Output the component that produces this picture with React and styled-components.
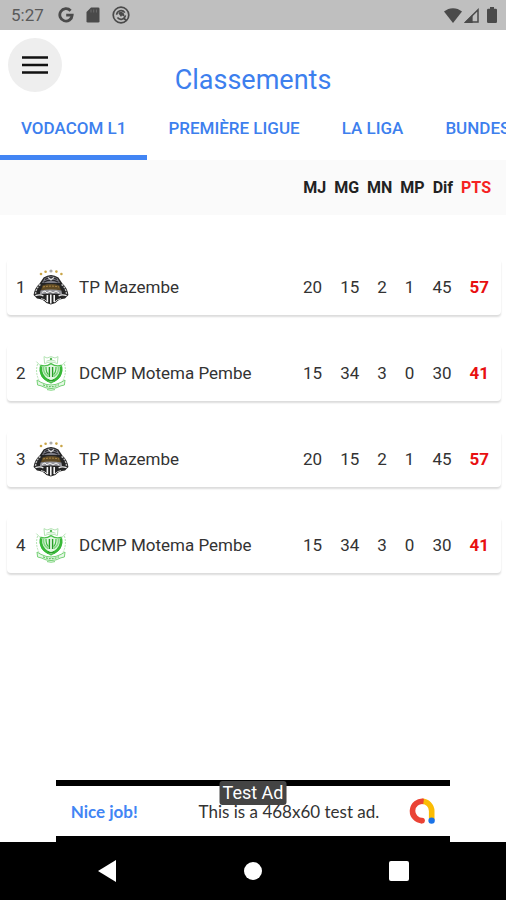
import React, { useState } from 'react';
import styled, { createGlobalStyle } from 'styled-components';

const leagues = ['Vodacom L1', 'Première Ligue', 'La Liga', 'Bundesliga'];

const headings = ['MJ', 'MG', 'MN', 'MP', 'Dif'];

const teams = [
  { rank: 1, name: 'TP Mazembe', crest: 'mazembe', stats: [20, 15, 2, 1, 45], points: 57 },
  { rank: 2, name: 'DCMP Motema Pembe', crest: 'dcmp', stats: [15, 34, 3, 0, 30], points: 41 },
  { rank: 3, name: 'TP Mazembe', crest: 'mazembe', stats: [20, 15, 2, 1, 45], points: 57 },
  { rank: 4, name: 'DCMP Motema Pembe', crest: 'dcmp', stats: [15, 34, 3, 0, 30], points: 41 },
];

const App = () => {
  const [active, setActive] = useState(0);

  return (
    <Screen>
      <GlobalStyle />
      <StatusBar />
      <Header>
        <MenuButton aria-label="Menu">
          <svg width="26" height="20" viewBox="0 0 26 20" stroke="#111" strokeWidth="2.6">
            <path d="M0 2.5h26M0 10h26M0 17.5h26" />
          </svg>
        </MenuButton>
        <Title>Classements</Title>
      </Header>
      <Tabs role="tablist">
        {leagues.map((league, i) => (
          <Tab key={league} role="tab" aria-selected={i === active} $active={i === active} onClick={() => setActive(i)}>
            {league}
          </Tab>
        ))}
      </Tabs>
      <Standings />
      <AdBanner />
      <SystemNav />
    </Screen>
  )
};

export default App

const StatusBar = () => (
  <StatusWrapper>
    <StatusGroup>
      <span>5:27</span>
      <GoogleMark width="16" height="16" viewBox="0 0 16 16" fill="none" stroke="#4a4a4a" strokeWidth="2.8">
        <path d="M12.6 3.7A6.2 6.2 0 1 0 14.2 8.2H8.2" />
      </GoogleMark>
      <svg width="14" height="16" viewBox="0 0 14 16">
        <path d="M5 .5h7.2q1.3 0 1.3 1.3v12.4q0 1.3-1.3 1.3H1.8Q.5 15.5.5 14.2V5z" fill="#4a4a4a" />
        <path d="M5 2.5v3M7.7 2.5v3M10.4 2.5v3" stroke="#6b6b6b" />
      </svg>
      <svg width="18" height="18" viewBox="0 0 18 18" fill="none" stroke="#4a4a4a">
        <circle cx="9" cy="9" r="7.8" strokeWidth="1.7" />
        <path d="M4.6 8.8A4.5 4.5 0 0 1 12.8 6.6M13.4 9.4A4.5 4.5 0 0 1 5.4 11.6" strokeWidth="1.6" />
        <path d="M6.4 7.2a3.2 3.2 0 0 1 5.4 3.4L10 9.6 9 11z" fill="#4a4a4a" stroke="none" />
        <path d="M11.5 12l3 2.6" strokeWidth="1.8" />
      </svg>
    </StatusGroup>
    <StatusGroup $tight>
      <svg width="18" height="15" viewBox="0 0 18 15">
        <path d="M9 15L0 3.6Q4 .2 9 .2t9 3.4z" fill="#4a4a4a" />
      </svg>
      <svg width="15" height="15" viewBox="0 0 15 15">
        <path d="M14 1.8V14H1.8z" fill="none" stroke="#4a4a4a" strokeWidth="1.5" />
        <path d="M8.6 6.4V15H0z" fill="#4a4a4a" />
      </svg>
      <Battery width="10" height="16" viewBox="0 0 10 16">
        <path d="M3 0h4v1.8h1.8Q10 1.8 10 3v11.8q0 1.2-1.2 1.2H1.2Q0 16 0 14.8V3q0-1.2 1.2-1.2H3z" fill="#4a4a4a" />
      </Battery>
    </StatusGroup>
  </StatusWrapper>
)

const Standings = () => (
  <Table>
    <thead>
      <HeadRow>
        {headings.map(h => <th key={h} scope="col">{h}</th>)}
        <PointsHead scope="col">PTS</PointsHead>
      </HeadRow>
    </thead>
    <Body>
      {teams.map(team => <TeamRow key={team.rank} team={team} />)}
    </Body>
  </Table>
)

const TeamRow = ({ team }) => (
  <Card>
    <Rank>{team.rank}</Rank>
    <CrestCell>{team.crest === 'mazembe' ? <MazembeCrest /> : <DcmpCrest />}</CrestCell>
    <Name>{team.name}</Name>
    {team.stats.map((value, i) => <td key={headings[i]}>{value}</td>)}
    <Points>{team.points}</Points>
  </Card>
)

const MazembeCrest = () => (
  <svg width="36" height="36" viewBox="0 0 36 36">
    <g fill="#c9a548">
      <circle cx="8" cy="5" r="1.3" />
      <circle cx="12.6" cy="2.8" r="1.3" />
      <circle cx="23.4" cy="2.6" r="1.3" />
      <circle cx="28.4" cy="5" r="1.3" />
    </g>
    <circle cx="18" cy="2" r="1.6" fill="#aaa" />
    <path d="M10.6 8.4Q18 3.4 25.4 8.4L29.4 14.4Q34.6 19 35.4 26L32 29.6Q25.6 30 22.4 34L17.8 35.6 13.4 34Q10 30 4 29.6L.6 26Q1.400 19 6.600 14.400z" fill="#252525" />
    <path d="M11.4 9.4Q18 5 24.600 9.400L27 14H9z" fill="#7c7c85" />
    <path d="M12 10.6q6-3.8 12 0M10.6 13.200q7.400-4.200 14.800 0" fill="none" stroke="#28282d" strokeWidth="1.2" />
    <path d="M15 8.4l3 2.600 3-2.600" fill="none" stroke="#ddd" strokeWidth="1.2" />
    <path d="M9.600 16.4q8.400-2.600 16.800 0l1.600 4.800H8z" fill="#5f4a24" />
    <path d="M10 18q8-1.800 16 0" fill="none" stroke="#ad8847" strokeWidth="1" strokeDasharray="2 1" />
    <path d="M7.600 21.6Q18 19.200 28.400 21.600L29.200 25.400Q18 23.400 6.800 25.400z" fill="#96969c" />
    <path d="M9 23.400l3-1.4 2 2 3-2 3 2 3-2 3 2" fill="none" stroke="#f3f3f3" strokeWidth="1" />
    <path d="M7.400 15.400Q3 19 2.400 25.400M28.600 15.400q4.400 3.600 5 10" stroke="#bbb" strokeWidth="1.4" strokeDasharray="2 1" fill="none" />
    <path d="M2.400 26.600q5-1.600 8 .4M33.600 26.600q-5-1.600-8 .4" stroke="#ececec" strokeWidth="1.4" fill="none" />
    <path d="M8 29.600q4 .4 6.400 3.600M28 29.600q-4 .4-6.400 3.600" stroke="#ccc" strokeWidth="1" fill="none" />
    <path d="M14.4 26v7M17.800 25.400v9M21.200 26v7" stroke="#f5f5f5" strokeWidth="1.6" />
  </svg>
)

const DcmpCrest = () => (
  <svg width="36" height="36" viewBox="0 0 36 36" fill="none">
    <g stroke="#b4e4b4" strokeWidth="1">
      <path d="M11 1.600l3 1.400 4-1.400 4 1.400 3-1.400-.6 7Q18 5.400 11.600 8.600z" />
      <path d="M13.400 6.200q4.600-2.600 9.200 0M3.400 6.600L8 11.400M32.600 6.600L28 11.400" />
      <path d="M4.600 9Q1.800 18 6.600 26.400M31.400 9q2.800 9-2 17.400" strokeDasharray="2 1" />
    </g>
    <circle cx="18" cy="4" r="1.200" fill="#55b955" />
    <path d="M8 10.400q5 1.600 10-1.800 5 3.400 10 1.800 3.400 11.400-10 17.400Q4.600 21.800 8 10.400z" stroke="#4cc04c" strokeWidth="1.400" fill="#e3f7e3" />
    <path d="M8 11.600q-1.200 9.600 7.400 14.200M28 11.600q1.200 9.600-7.400 14.200" stroke="#38b838" strokeWidth="2.600" />
    <path d="M10.600 12q-.6 6.600 4.600 9.600M25.400 12q.6 6.600-4.600 9.600" stroke="#86d886" strokeWidth="1.600" />
    <path d="M13 12q-.2 5 2.400 7.600M23 12q.2 5-2.400 7.600" stroke="#43bd43" strokeWidth="1.200" />
    <path d="M16.400 12v10M19.600 12v10" stroke="#279c27" strokeWidth="1.400" />
    <path d="M15 24.600q3 2.400 6 0" stroke="#279c27" strokeWidth="1.400" />
    <path d="M4 25l4 2.400Q18 32.600 28 27.400l4-2.400-.6 5-3.400.8Q18 36.400 8 30.800l-3.400-.8z" fill="#e5f7e5" stroke="#77d277" strokeWidth="1" />
    <path d="M10 29.800q8 3.800 16 0" stroke="#63c463" strokeWidth="1.200" strokeDasharray="2 1" />
    <path d="M14 34.600q4 1.200 8 0" stroke="#77d277" strokeWidth="1" />
  </svg>
)

const AdBanner = () => (
  <Ad>
    <AdTag>Test Ad</AdTag>
    <AdTitle href="#ad">Nice job!</AdTitle>
    <AdText>This is a 468x60 test ad.</AdText>
    <svg width="26" height="26" viewBox="0 0 26 26" fill="none" strokeWidth="5.6">
      <path d="M13 3.300a9.700 9.700 0 0 1 9.700 9.700v9" stroke="#fbbc04" />
      <path d="M14.600 3.400A9.700 9.700 0 1 0 13 22.700" stroke="#ea4335" />
      <circle cx="13" cy="22.600" r="2.900" fill="#ea4335" stroke="none" />
      <circle cx="22.600" cy="22.600" r="3.200" fill="#1a73e8" stroke="none" />
    </svg>
  </Ad>
)

const SystemNav = () => (
  <Nav aria-label="System">
    <NavButton aria-label="Back">
      <svg width="18" height="22" viewBox="0 0 18 22"><path d="M18 0v22L0 11z" fill="#fff" /></svg>
    </NavButton>
    <NavButton aria-label="Home">
      <svg width="18" height="18" viewBox="0 0 18 18"><circle cx="9" cy="9" r="9" fill="#fff" /></svg>
    </NavButton>
    <NavButton aria-label="Recents">
      <svg width="20" height="20" viewBox="0 0 20 20"><rect width="20" height="20" rx="2" fill="#fff" /></svg>
    </NavButton>
  </Nav>
)

const GlobalStyle = createGlobalStyle`
  * {
    box-sizing: border-box;
  }

  body {
    margin: 0;
    background: #fff;
    font-family: Roboto, 'Liberation Sans', sans-serif;
  }

  button {
    border: 0;
    padding: 0;
    background: none;
    font-family: inherit;
    cursor: pointer;
  }

  svg {
    display: block;
    flex-shrink: 0;
  }
`

const Screen = styled.div`
  display: flex;
  flex-direction: column;
  min-height: 100vh;
  overflow: hidden;
`

const StatusWrapper = styled.div`
  display: flex;
  align-items: center;
  justify-content: space-between;
  height: 30px;
  padding: 0 9px 0 11px;
  background: #bfbfbf;
  color: #5a5a5a;
  font-size: 17px;
`

const StatusGroup = styled.div`
  display: flex;
  align-items: center;
  gap: ${({ $tight }) => ($tight ? '2px' : '12px')};
`

const GoogleMark = styled.svg`
  margin-left: 2px;
`

const Battery = styled.svg`
  margin-left: 6px;
`

const Header = styled.header`
  display: grid;
  grid-template-columns: 54px 1fr 54px;
  padding: 8px 8px 0;
`

const MenuButton = styled.button`
  display: flex;
  align-items: center;
  justify-content: center;
  width: 54px;
  height: 54px;
  border-radius: 50%;
  background: #eee;
`

const Title = styled.h1`
  align-self: end;
  margin: 26px 0 0;
  color: #3d7fee;
  font-size: 27px;
  font-weight: 400;
  line-height: 32px;
  text-align: center;
`

const Tabs = styled.div`
  display: flex;
  height: 64px;
  overflow-x: auto;
  scrollbar-width: none;
`

const Tab = styled.button`
  flex-shrink: 0;
  padding: 5px 21px 0;
  border-bottom: 5px solid ${({ $active }) => ($active ? '#4285f4' : 'transparent')};
  color: #3d7fee;
  font-size: 17px;
  font-weight: 500;
  text-transform: uppercase;
`

const Table = styled.table`
  display: flex;
  flex: 1;
  flex-direction: column;
  color: #333;
  font-size: 17px;
`

const HeadRow = styled.tr`
  display: flex;
  align-items: center;
  justify-content: flex-end;
  gap: 8px;
  height: 55px;
  padding: 0 15px;
  background: #fafafa;
  color: #222;
  font-size: 16px;

  th {
    padding: 0;
  }
`

const PointsHead = styled.th`
  color: #f52222;
`

const Body = styled.tbody`
  display: flex;
  flex-direction: column;
  gap: 30px;
  padding: 44px 5px 30px 7px;
`

const Card = styled.tr`
  display: flex;
  align-items: center;
  gap: 18px;
  height: 56px;
  padding: 0 12px 0 9px;
  border-radius: 4px;
  box-shadow: 0 2px 2px rgba(0, 0, 0, 0.14);

  td {
    padding: 0;
  }
`

const Rank = styled.td`
  width: 10px;
`

const CrestCell = styled.td`
  margin: 0 -8px 0 -11px;
`

const Name = styled.td`
  flex: 1;
`

const Points = styled.td`
  color: #e81010;
  font-weight: 700;
`

const Ad = styled.aside`
  position: relative;
  display: flex;
  align-items: center;
  gap: 30px;
  align-self: center;
  width: 78%;
  height: 62px;
  padding: 0 15px;
  border: solid #000;
  border-width: 6px 0;
  background: #fff;
  font-family: Lato, sans-serif;
  font-size: 17px;
`

const AdTag = styled.span`
  position: absolute;
  top: -5px;
  left: 50%;
  padding: 0 3px;
  border-radius: 3px;
  background: #444;
  color: #fff;
  font-family: Roboto, sans-serif;
  font-size: 18px;
  line-height: 24px;
  transform: translateX(-50%);
`

const AdTitle = styled.a`
  margin-right: auto;
  color: #4285f4;
  font-weight: 700;
  text-decoration: none;
`

const AdText = styled.span`
  color: #333;
`

const Nav = styled.nav`
  display: flex;
  align-items: center;
  justify-content: space-between;
  height: 58px;
  padding: 0 19%;
  background: #000;

  @media (min-width: 500px) {
    padding: 0 97px;
  }
`

const NavButton = styled.button`
  display: flex;
  align-items: center;
  justify-content: center;
  width: 20px;
  height: 40px;
`
